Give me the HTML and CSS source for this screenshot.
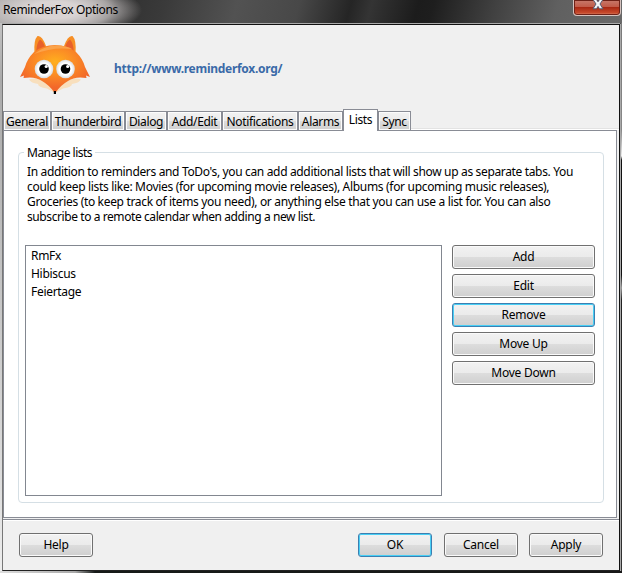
FILE: index.html
```html
<!DOCTYPE html>
<html lang="en">
<head>
<meta charset="utf-8">
<title>ReminderFox Options</title>
<link rel="stylesheet" href="styles.css">
</head>
<body>
<div class="window">
  <header class="titlebar">
    <span class="title">ReminderFox Options</span>
    <button class="close" aria-label="Close">
      <svg width="14" height="12" viewBox="0 0 14 12"><path d="M2 -.5H5.5L7 1.8L8.5 -.5H12L9 4L12 8.8H8.5L7 6.4L5.5 8.8H2L5 4Z" fill="#f4f4f6" stroke="#555a70" stroke-width="1"/></svg>
    </button>
  </header>
  <main class="dialog">
    <div class="banner">
      <svg class="fox" width="72" height="61" viewBox="0 0 72 61">
        <defs>
          <radialGradient id="fur" cx=".5" cy=".36" r=".55"><stop offset="0" stop-color="#ffb01e"/><stop offset=".5" stop-color="#fb8c25"/><stop offset="1" stop-color="#f2672a"/></radialGradient>
          <radialGradient id="eye"><stop offset=".65" stop-color="#fff"/><stop offset="1" stop-color="#d9dcdf"/></radialGradient>
        </defs>
        <path d="M10 44.500Q22 40 36 56Q50 40 62 44.500Q60 48 53 49Q53 52 44 53.500L36 58L28 53.500Q19 52 19 49Q12 48 10 44.500Z" fill="#f8dfbd"/>
        <path d="M15.500 18Q14.500 5 18.500 1Q23 0 27 11L28 16Z" fill="#f78f25"/><path d="M56.500 18Q57.500 5 53.500 1Q49 0 45 11L44 16Z" fill="#f78f25"/>
        <path d="M17 17Q18 7 21 4.500Q25 7 27 15ZM55 17Q54 7 51 4.500Q47 7 45 15Z" fill="#e8602b"/>
        <path d="M15 17Q24 10 36 10Q48 10 57 17Q64 24 66 32L71 42L67 40.500L67.500 43Q56 41 49 46Q42 50 37 57H35Q30 50 23 46Q16 41 4.500 43L5 40.500L1 42L6 32Q8 24 15 17Z" fill="url(#fur)"/>
        <path d="M15 19Q25 11 36 10.500Q47 10 53 14Q34 11.500 15 19Z" fill="#fba34a"/>
        <circle cx="25" cy="34" r="9.300" fill="url(#eye)"/><circle cx="46.500" cy="34" r="9.300" fill="url(#eye)"/>
        <circle cx="25" cy="34" r="4.800"/><circle cx="46.500" cy="34" r="4.800"/>
        <circle cx="27.200" cy="31.500" r="1.600" fill="#fff"/><circle cx="48.700" cy="31.500" r="1.600" fill="#fff"/>
        <path d="M34.800 56H37V59H34.800Z"/>
      </svg>
      <a class="site">http://www.reminderfox.org/</a>
    </div>
    <nav class="tabs">
      <span class="tab general">General</span><span class="tab thunderbird">Thunderbird</span><span class="tab dlg">Dialog</span><span class="tab addedit">Add/Edit</span><span class="tab notifications">Notifications</span><span class="tab alarms">Alarms</span><span class="tab lists active">Lists</span><span class="tab sync">Sync</span>
    </nav>
    <section class="panel">
      <fieldset class="group">
        <legend>Manage lists</legend>
        <p class="intro"><span class="l1">In addition to reminders and ToDo's, you can add additional lists that will show up as separate tabs. You</span><br><span class="l2">could keep lists like: Movies (for upcoming movie releases), Albums (for upcoming music releases),</span><br><span class="l3">Groceries (to keep track of items you need), or anything else that you can use a list for. You can also</span><br><span class="l4">subscribe to a remote calendar when adding a new list.</span></p>
        <div class="columns">
          <ul class="listbox"><li>RmFx</li><li>Hibiscus</li><li>Feiertage</li></ul>
          <div class="actions">
            <button class="btn">Add</button>
            <button class="btn">Edit</button>
            <button class="btn focus">Remove</button>
            <button class="btn">Move Up</button>
            <button class="btn">Move Down</button>
          </div>
        </div>
      </fieldset>
    </section>
    <footer class="footer">
      <button class="btn">Help</button>
      <button class="btn focus ok">OK</button>
      <button class="btn cancel">Cancel</button>
      <button class="btn">Apply</button>
    </footer>
  </main>
</div>
</body>
</html>
```
FILE: styles.css
```css
* { box-sizing: border-box; }
body { margin: 0; overflow: hidden; font: 12px/15px "Noto Sans", "Open Sans", sans-serif; color: #000; letter-spacing: -.23px; }
button { font: inherit; letter-spacing: inherit; color: inherit; padding: 0; margin: 0; }
.window {
  width: 622px; height: 573px; padding: 0 2px 2px; display: grid; grid-template-rows: 23px 548px;
  background:
    linear-gradient(90deg, #ddd 0, #aaa 75px, #161a18 95px, #181818 100%) 0 571px / 622px 2px no-repeat,
    linear-gradient(#777 0, #888 130px, #eee 156px, #111 160px, #111 275px, #999 288px, #222 300px, #333 100%) 621px 0 / 1px 573px no-repeat,
    linear-gradient(#ccc, #aaa 80px, #ddd 480px, #eee) 0 0 / 2px 573px no-repeat, #555;
}
.titlebar {
  margin: 0 -2px; display: flex; justify-content: space-between; padding: 0 1px 0 3px;
  background:
    radial-gradient(ellipse 88px 28px at 54px 10px, rgba(222,216,216,.95) 30%, rgba(200,195,195,.75) 65%, transparent 100%),
    linear-gradient(105deg, #999 0, #747474 80px, #303030 112px, #3a3a3a 160px, #525252 230px, #484848 290px, #252525 340px, #343434 360px, #1c1c1c 405px, #1e1e1e 420px, #414141 480px, #606060 540px, #6b6b6b 622px);
}
.title { line-height: 20px; letter-spacing: -.4px; }
.close {
  width: 48px; height: 16px; border: 1px solid #d6c3bf; border-top: 0; border-radius: 0 0 4px 4px;
  background: linear-gradient(#c77a6c, #c25b49 45%, #a92914 50%, #c84a2c 85%, #d98b72); box-shadow: inset 0 0 0 1px #6e2117; display: flex; justify-content: center; align-items: flex-start;
}
.close svg { margin-left: 2px; }
.dialog {
  border: 1px solid #111; border-left-color: #777; border-bottom-color: #222; background: #f0f0f0; box-shadow: 0 -1px #aaa, 1px 0 #aaa; margin-top: 1px; width: 618px;
  display: grid; grid-template-rows: 84px 21px 388px 1fr; height: 547px;
}
.banner { display: flex; align-items: flex-start; padding: 10px 0 0 16px; }
.site { font-weight: 700; color: #3a6aa8; margin: 26px 0 0 23px; letter-spacing: -.28px; }
.tabs { display: flex; align-items: flex-end; border-bottom: 1px solid #fff; box-shadow: inset 0 -1px #e3e3e3; }
.tab {
  height: 19px; border: 1px solid #898c95; border-bottom: 0; margin-bottom: -1px; text-align: center; line-height: 19px; white-space: nowrap;
  background: linear-gradient(#f2f2f2, #ebebeb 48%, #ddd 52%, #cfcfcf); box-shadow: inset 0 0 0 1px #fcfcfc; flex: none; letter-spacing: -.35px;
}
.general { width: 48px; }
.thunderbird { width: 74px; }
.dlg { width: 42px; }
.addedit { width: 55px; }
.notifications { width: 76px; }
.alarms { width: 45px; }
.lists { width: 35px; }
.sync { width: 33px; }
.tab.active { height: 22px; background: #fff; box-shadow: none; margin-bottom: -2px; z-index: 1; }
.panel { background: #fff; border: 1px solid #898c95; margin-right: 2px; padding: 15px 12px 14px 14px; min-width: 0; }
.group { border: 1px solid #d5dfe5; border-radius: 4px; margin: 6px 0 0; padding: 0 8px 6px 6px; height: 351px; min-width: 0; }
.group legend { float: left; margin: -8px 0 0 -1px; padding: 0 3px; background: #fff; letter-spacing: -.5px; }
.intro { clear: both; margin: 0 0 0 2px; padding: 4px 0 0; white-space: nowrap; height: 85px; }
.group legend + .intro { margin-top: 4px; }
.l1 { letter-spacing: -.347px; }
.l2 { letter-spacing: -.314px; }
.l3 { letter-spacing: -.33px; }
.l4 { letter-spacing: -.415px; }
.columns { display: grid; grid-template-columns: 417px 143px; gap: 10px; }
.listbox { height: 251px; margin: 0; padding: 1px 5px; list-style: none; border: 1px solid #828790; letter-spacing: -.3px; }
.listbox li { height: 18px; line-height: 17px; }
.actions { display: flex; flex-direction: column; gap: 5px; }
.btn {
  height: 24px; border: 1px solid #707070; border-radius: 3px; line-height: 22px; text-align: center;
  background: linear-gradient(#f2f2f2, #ebebeb 49%, #ddd 50%, #cfcfcf); box-shadow: inset 0 0 0 1px #fafafa;
}
.btn.focus { border-color: #3c7fb1; box-shadow: inset 0 0 0 1px #48cff5; }
.footer { border-top: 1px solid #898c95; box-shadow: inset 0 1px #fff; display: flex; align-items: flex-start; padding: 13px 0 0 16px; margin-top: 1px; }
.footer .btn { width: 74px; }
.footer .ok { margin-left: 265px; margin-right: 12px; }
.footer .cancel { margin-right: 11px; }
```
